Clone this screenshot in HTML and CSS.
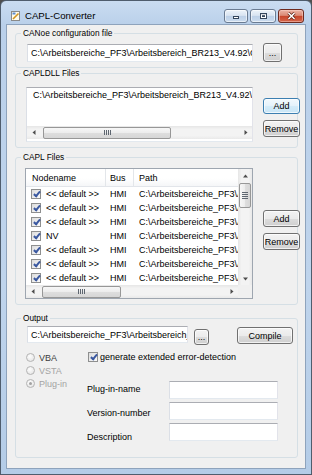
FILE: index.html
```html
<!DOCTYPE html>
<html lang="de">
<head>
  <meta charset="UTF-8">
  <title>CAPL-Converter</title>
  <link rel="stylesheet" href="styles.css">
</head>
<body>
  <div class="window">
    <div class="titlebar">
      <svg class="app-icon" width="9" height="10" viewBox="0 0 9 10">
        <rect x="0.5" y="0.5" width="8" height="9" fill="#fffbea" stroke="#8a8a8a"/>
        <rect x="1.5" y="1.5" width="3" height="2" fill="#5b8bd0"/>
        <path d="M2 8 L7.5 2.5" stroke="#d09422" stroke-width="1.6"/>
      </svg>
      <span class="title">CAPL-Converter</span>
      <div class="caption">
        <span class="cap-btn cap-min">
          <svg width="8" height="8" viewBox="0 0 8 8"><rect x="1.5" y="4.5" width="5" height="2" fill="#fff" stroke="#34465c"/></svg>
        </span>
        <span class="cap-btn cap-max">
          <svg width="9" height="8" viewBox="0 0 9 8"><rect x="1" y="1" width="7" height="6" fill="#34465c"/><rect x="2" y="2.2" width="5" height="3.8" fill="#fff"/><rect x="3" y="3.2" width="3" height="1.8" fill="#34465c"/></svg>
        </span>
        <span class="cap-btn cap-close">
          <svg width="9" height="8" viewBox="0 0 9 8"><path d="M1.5 1 L7.5 7 M7.5 1 L1.5 7" stroke="#5a1d12" stroke-width="3"/><path d="M1.5 1 L7.5 7 M7.5 1 L1.5 7" stroke="#fff" stroke-width="1.6"/></svg>
        </span>
      </div>
    </div>

    <div class="client">
      <fieldset class="group g-config">
        <legend>CANoe configuration file</legend>
        <div class="row row-config">
          <div class="tb tb-config"><span class="clip">C:\Arbeitsbereiche_PF3\Arbeitsbereich_BR213_V4.92\CANoe\BR213.cfg</span></div>
          <button class="btn btn-browse1">...</button>
        </div>
      </fieldset>

      <fieldset class="group g-dll">
        <legend>CAPLDLL Files</legend>
        <div class="row row-dll">
          <div class="listbox">
            <div class="lb-items">
              <div class="lb-item">C:\Arbeitsbereiche_PF3\Arbeitsbereich_BR213_V4.92\CANoe\capldll.dll</div>
            </div>
            <div class="hscroll hs-dll">
              <span class="sb-arrow"><svg width="4" height="5" viewBox="0 0 4 5"><path d="M3.5 0 L0.5 2.5 L3.5 5 Z" fill="#4d4d4d"/></svg></span>
              <span class="sb-thumb h-thumb"><span class="grip-v"></span></span>
              <span class="sb-rest"></span>
              <span class="sb-arrow"><svg width="4" height="5" viewBox="0 0 4 5"><path d="M0.5 0 L3.5 2.5 L0.5 5 Z" fill="#4d4d4d"/></svg></span>
            </div>
          </div>
          <div class="side-buttons sb-dll">
            <button class="btn btn-side btn-default">Add</button>
            <button class="btn btn-side">Remove</button>
          </div>
        </div>
      </fieldset>

      <fieldset class="group g-capl">
        <legend>CAPL Files</legend>
        <div class="row row-capl">
          <div class="listview">
            <div class="lv-main">
              <div class="lv-header">
                <span class="lv-cell c-name">Nodename</span>
                <span class="lv-cell c-bus">Bus</span>
                <span class="lv-cell c-path">Path</span>
              </div>
              <div class="lv-row"><span class="lv-cell c-name"><span class="chk"></span><span class="lv-text">&lt;&lt; default &gt;&gt;</span></span><span class="lv-cell c-bus">HMI</span><span class="lv-cell c-path">C:\Arbeitsbereiche_PF3\Arbeitsbereich</span></div>
              <div class="lv-row"><span class="lv-cell c-name"><span class="chk"></span><span class="lv-text">&lt;&lt; default &gt;&gt;</span></span><span class="lv-cell c-bus">HMI</span><span class="lv-cell c-path">C:\Arbeitsbereiche_PF3\Arbeitsbereich</span></div>
              <div class="lv-row"><span class="lv-cell c-name"><span class="chk"></span><span class="lv-text">&lt;&lt; default &gt;&gt;</span></span><span class="lv-cell c-bus">HMI</span><span class="lv-cell c-path">C:\Arbeitsbereiche_PF3\Arbeitsbereich</span></div>
              <div class="lv-row"><span class="lv-cell c-name"><span class="chk"></span><span class="lv-text">NV</span></span><span class="lv-cell c-bus">HMI</span><span class="lv-cell c-path">C:\Arbeitsbereiche_PF3\Arbeitsbereich</span></div>
              <div class="lv-row"><span class="lv-cell c-name"><span class="chk"></span><span class="lv-text">&lt;&lt; default &gt;&gt;</span></span><span class="lv-cell c-bus">HMI</span><span class="lv-cell c-path">C:\Arbeitsbereiche_PF3\Arbeitsbereich</span></div>
              <div class="lv-row"><span class="lv-cell c-name"><span class="chk"></span><span class="lv-text">&lt;&lt; default &gt;&gt;</span></span><span class="lv-cell c-bus">HMI</span><span class="lv-cell c-path">C:\Arbeitsbereiche_PF3\Arbeitsbereich</span></div>
              <div class="lv-row"><span class="lv-cell c-name"><span class="chk"></span><span class="lv-text">&lt;&lt; default &gt;&gt;</span></span><span class="lv-cell c-bus">HMI</span><span class="lv-cell c-path">C:\Arbeitsbereiche_PF3\Arbeitsbereich</span></div>
            </div>
            <div class="vscroll">
              <span class="sb-arrow"><svg width="5" height="4" viewBox="0 0 5 4"><path d="M0 3.5 L2.5 0.5 L5 3.5 Z" fill="#4d4d4d"/></svg></span>
              <span class="sb-thumb v-thumb"><span class="grip-h"></span></span>
              <span class="sb-rest"></span>
              <span class="sb-arrow"><svg width="5" height="4" viewBox="0 0 5 4"><path d="M0 0.5 L2.5 3.5 L5 0.5 Z" fill="#4d4d4d"/></svg></span>
            </div>
            <div class="hscroll hs-capl">
              <span class="sb-arrow"><svg width="4" height="5" viewBox="0 0 4 5"><path d="M3.5 0 L0.5 2.5 L3.5 5 Z" fill="#4d4d4d"/></svg></span>
              <span class="sb-thumb h-thumb"><span class="grip-v"></span></span>
              <span class="sb-rest"></span>
              <span class="sb-arrow"><svg width="4" height="5" viewBox="0 0 4 5"><path d="M0.5 0 L3.5 2.5 L0.5 5 Z" fill="#4d4d4d"/></svg></span>
            </div>
            <div class="lv-corner"></div>
          </div>
          <div class="side-buttons sb-capl">
            <button class="btn btn-side">Add</button>
            <button class="btn btn-side">Remove</button>
          </div>
        </div>
      </fieldset>

      <fieldset class="group g-out">
        <legend>Output</legend>
        <div class="row row-out">
          <div class="tb tb-out"><span class="clip">C:\Arbeitsbereiche_PF3\Arbeitsbereich_BR213_V4.92\Output</span></div>
          <button class="btn btn-browse2">...</button>
          <button class="btn btn-compile">Compile</button>
        </div>
        <div class="out-lower">
          <div class="radios">
            <div class="radio"><span class="rad"></span><span class="rad-text">VBA</span></div>
            <div class="radio off"><span class="rad"></span><span class="rad-text">VSTA</span></div>
            <div class="radio off"><span class="rad on"></span><span class="rad-text">Plug-in</span></div>
          </div>
          <div class="out-right">
            <div class="chk-row"><span class="chk"></span><span class="chk-text">generate extended error-detection</span></div>
            <div class="fields">
              <div class="field-labels">
                <span>Plug-in-name</span>
                <span>Version-number</span>
                <span>Description</span>
              </div>
              <div class="field-boxes">
                <div class="tb tb-field"></div>
                <div class="tb tb-field"></div>
                <div class="tb tb-field"></div>
              </div>
            </div>
          </div>
        </div>
      </fieldset>
    </div>
  </div>
</body>
</html>
```

FILE: styles.css
```css
body { margin: 0; background: #4f4f4f; font-family: "Liberation Sans", Arial, sans-serif; font-size: 9px; color: #000; }

/* window frame */
.window { box-sizing: border-box; width: 312px; height: 475px; display: flex; flex-direction: column; padding: 0 5px 5px; border: 1px solid #4f5d6d; border-radius: 6px 6px 0 0; background: linear-gradient(#cadcf1, #bad0ea 24px, #bfd4ec 60%, #b4cce7); }
.titlebar { box-sizing: border-box; height: 23px; display: flex; align-items: center; padding: 6px 2px 0 5px; }
.app-icon { flex: none; }
.title { margin-left: 5px; font-size: 9.6px; line-height: 12px; color: #000; }
.caption { margin-left: auto; display: flex; gap: 2px; }
.cap-btn { box-sizing: border-box; height: 14px; display: flex; align-items: center; justify-content: center; border: 1px solid #6a7b92; border-radius: 3px; background: linear-gradient(#edf3fa, #d9e4f1 45%, #bdd0e7 52%, #cbdcef); box-shadow: inset 0 0 0 1px rgba(255,255,255,.55); }
.cap-min { width: 24px; }
.cap-max { width: 26px; }
.cap-close { width: 26px; border-color: #6e2a1e; background: linear-gradient(#ebb4a6, #db8a76 45%, #c8462c 52%, #d4664b); box-shadow: inset 0 0 0 1px rgba(255,220,210,.45); }

.client { flex: 1; border: 1px solid #8ea3bc; background: #f0f0f0; padding: 0 7px 0 8px; }

/* group boxes */
.group { display: block; box-sizing: border-box; margin: 0; padding: 0; min-width: 0; border: 1px solid #d5dfe5; border-radius: 3px; }
.group legend { margin-left: 5px; padding: 0 2px; font-size: 8.3px; line-height: 11px; }
.g-config { margin-top: 3px; height: 40px; }
.g-dll { height: 80px; }
.g-capl { margin-top: 4px; height: 153px; }
.g-out { margin-top: 8px; height: 145px; }

.row { display: flex; align-items: flex-start; }
.row-config { padding: 4px 0 0 11px; }
.row-dll { padding: 8px 0 0 10px; }
.row-capl { padding: 5px 0 0 9px; }
.row-out { padding-left: 11px; height: 21px; }

/* controls */
.tb { box-sizing: border-box; display: flex; align-items: center; padding-left: 3px; background: #fff; border: 1px solid; border-color: #abadb3 #e2e3ea #e3e9ef #dbdfe6; white-space: nowrap; overflow: hidden; }
.clip { overflow: hidden; min-width: 0; }
.tb-config { width: 226px; height: 18px; margin-top: 1px; }
.tb-out { width: 161px; height: 17px; margin-top: 2px; }
.tb-field { width: 109px; height: 18px; }

.btn { box-sizing: border-box; display: flex; align-items: center; justify-content: center; padding: 0; font: inherit; color: #000; border: 1px solid #707070; border-radius: 3px; background: linear-gradient(#f3f3f3, #ebebeb 50%, #dddddd 51%, #cfcfcf); box-shadow: inset 0 0 0 1px rgba(255,255,255,.7); white-space: nowrap; }
.btn-default { border-color: #3c7fb1; background: linear-gradient(#f2f9fd, #e4f2fb 50%, #d4ecf9 51%, #c8e5f6); }
.btn-browse1 { width: 19px; height: 19px; margin-left: 10px; }
.btn-browse2 { width: 15px; height: 16px; margin: 5px 0 0 6px; }
.btn-compile { width: 56px; height: 17px; margin: 3px 0 0 28px; }
.side-buttons { display: flex; flex-direction: column; gap: 6px; margin-left: 10px; }
.sb-dll { margin-top: 11px; }
.sb-capl { margin-top: 42px; }
.btn-side { width: 37px; height: 17px; }
.sb-dll .btn-default { height: 16px; }

/* list box */
.listbox { box-sizing: border-box; width: 227px; height: 55px; display: flex; flex-direction: column; background: #fff; border: 1px solid; border-color: #abadb3 #e2e3ea #e3e9ef #dbdfe6; }
.lb-items { height: 38px; overflow: hidden; }
.lb-item { height: 14px; line-height: 14px; padding-left: 6px; white-space: nowrap; overflow: hidden; }

/* scroll bars */
.hscroll { height: 13px; display: flex; align-items: center; background: linear-gradient(#e6e6e6, #f3f3f3 25%, #f3f3f3 75%, #e9e9e9); }
.vscroll { display: flex; flex-direction: column; align-items: center; background: linear-gradient(90deg, #e6e6e6, #f3f3f3 25%, #f3f3f3 75%, #e9e9e9); }
.sb-arrow { flex: none; width: 13px; height: 13px; display: flex; align-items: center; justify-content: center; }
.sb-rest { flex: 1; }
.sb-thumb { box-sizing: border-box; flex: none; display: flex; align-items: center; justify-content: center; border: 1px solid #979797; border-radius: 2px; }
.h-thumb { height: 12px; margin-left: 3px; background: linear-gradient(#f7f7f7, #ececec 50%, #dedede 51%, #d6d6d6); }
.hs-dll .h-thumb { width: 128px; }
.hs-capl .h-thumb { width: 79px; }
.v-thumb { width: 12px; height: 25px; margin-top: 1px; background: linear-gradient(90deg, #f7f7f7, #ececec 50%, #dedede 51%, #d6d6d6); }
.grip-v { width: 7px; height: 5px; background: repeating-linear-gradient(90deg, #5e6670 0 1px, transparent 1px 2px); }
.grip-h { width: 6px; height: 7px; background: repeating-linear-gradient(#5e6670 0 1px, transparent 1px 2px); }

/* list view */
.listview { box-sizing: border-box; width: 228px; height: 131px; display: grid; grid-template-columns: 212px 14px; grid-template-rows: 116px 13px; background: #fff; border: 1px solid #9ea6b0; }
.lv-main { overflow: hidden; }
.lv-header { box-sizing: border-box; height: 18px; display: flex; border-bottom: 1px solid #e2e5ea; background: linear-gradient(#fff 55%, #f5f6f8); }
.lv-header .lv-cell { display: flex; align-items: center; border-right: 1px solid #e3e6ea; }
.lv-header .c-name { padding-left: 6px; }
.lv-header .c-bus { padding-left: 4px; }
.lv-header .c-path { padding-left: 5px; border-right: 0; }
.lv-row { height: 14px; display: flex; align-items: center; white-space: nowrap; }
.lv-cell { box-sizing: border-box; flex: none; overflow: hidden; white-space: nowrap; }
.c-name { width: 80px; }
.c-bus { width: 28px; }
.c-path { width: 104px; }
.lv-row .c-name { display: flex; align-items: center; padding-left: 5px; }
.lv-row .c-bus { padding-left: 4px; }
.lv-row .c-path { padding-left: 5px; }
.lv-text { margin-left: 5px; }
.lv-corner { background: #f0f0f0; }

/* check boxes and radios */
.chk { box-sizing: border-box; position: relative; flex: none; width: 10px; height: 10px; border: 1px solid #8e8f8f; background: linear-gradient(135deg, #dcdcdc, #fbfbfb); }
.chk::after { content: ""; position: absolute; left: 2.5px; top: 0; width: 2px; height: 5px; border: solid #3a58a0; border-width: 0 2px 2px 0; transform: rotate(40deg); }

.out-lower { display: grid; grid-template-columns: 60px auto; padding: 6px 0 0 11px; }
.radios { display: flex; flex-direction: column; }
.radio { height: 13px; display: flex; align-items: center; }
.rad { box-sizing: border-box; width: 9px; height: 9px; margin-left: -1px; display: flex; align-items: center; justify-content: center; border: 1px solid #b4b4b4; border-radius: 50%; background: radial-gradient(circle at 40% 35%, #fdfdfd, #e0e0e0); }
.rad.on::after { content: ""; width: 3px; height: 3px; border-radius: 50%; background: #a2a2a2; }
.rad-text { margin-left: 4px; color: #3c3c3c; }
.radio.off .rad-text { color: #a3a3a3; }

.chk-row { height: 12px; display: flex; align-items: center; }
.chk-row .chk { margin-left: 1px; }
.chk-text { margin-left: 2px; }
.fields { display: flex; margin-top: 18px; }
.field-labels { width: 82px; display: flex; flex-direction: column; gap: 12px; padding-top: 2px; }
.field-labels span { line-height: 12px; }
.field-boxes { display: flex; flex-direction: column; gap: 3px; }
```
